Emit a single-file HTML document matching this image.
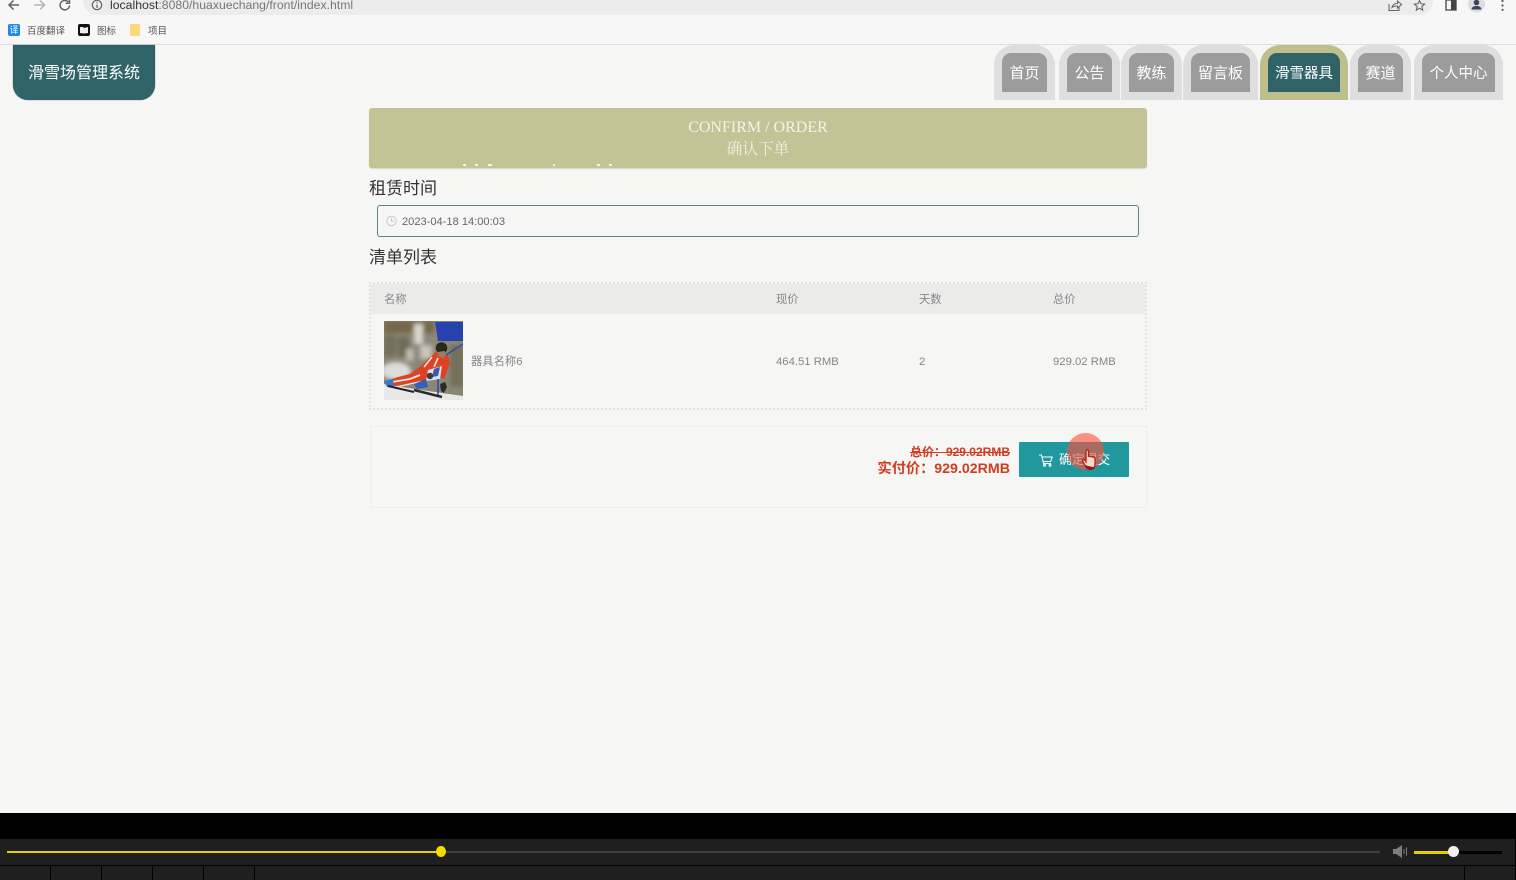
<!DOCTYPE html>
<html lang="zh"><head><meta charset="utf-8"><title>确认下单</title>
<style>
html,body{margin:0;padding:0;width:1516px;height:880px;overflow:hidden;background:#f6f6f5}
body{position:relative;font-family:"Liberation Sans","Noto Sans CJK SC",sans-serif}
.a{position:absolute;white-space:nowrap}
svg{position:absolute;overflow:visible}
.tab{position:absolute;top:45px;height:55px;background:#dedede;border-radius:20px 20px 0 0}
.tab.on{background:#bfbf8c}
.tab span{position:absolute;left:8px;right:8px;top:8px;height:39px;background:#9c9c9c;border-radius:9px 9px 0 0;color:#fff;font-size:15px;line-height:41px;text-align:center;white-space:nowrap}
.tab span.s{font-size:14.500px;line-height:42px}
.tab.on span{background:#2f6367}
.g{font-size:11.300px;color:#868686;line-height:14px}
.dash{position:absolute;top:164px;height:1.5px;background:#f4f4ea}
.div{position:absolute;top:866px;height:14px;width:1px;background:#000}
</style></head><body>

<!-- browser chrome -->
<div class="a" style="left:0;top:0;width:1516px;height:44px;background:#f7f7f7;border-bottom:1px solid #dcdcdc"></div>
<div class="a" style="left:83px;top:-12px;width:1350px;height:27px;background:#ececec;border-radius:14px"></div>
<svg style="left:0;top:0" width="120" height="15" fill="none" stroke="#5f6368" stroke-width="1.5">
<path d="M19 5H9.500M13.500 .5L9 5l4.500 4.500"/>
<path d="M34 5h10M40 .5L44.500 5 40 9.500" stroke="#b5b5b5"/>
<path d="M69.500 5.500a4.700 4.700 0 1 1-1.300-3.600M69.500 -.5v3.800h-3.800"/>
<circle cx="97" cy="5" r="4.700" stroke-width="1.200"/><path d="M97 4.500V8M97 2v1.200" stroke-width="1.200"/>
</svg>
<div class="a" style="left:110px;top:-3px;font-size:12.250px;line-height:16px;color:#777"><span style="color:#333">localhost</span>:8080/huaxuechang/front/index.html</div>
<svg style="left:1380px;top:0" width="136" height="15" fill="none" stroke="#666" stroke-width="1.100">
<path d="M9 4v6.500h10V7M12 7.500c.5-3 3-4 5.500-4V1l4 3.500-4 3.500V6c-2 0-4 .2-5.500 1.500z"/>
<path d="M39.500 .5l1.500 3.300 3.600.4-2.700 2.400.8 3.500-3.200-1.800-3.200 1.800.8-3.500-2.700-2.400 3.600-.4z"/>
<path d="M66 0h10v10H66z" stroke="#444" stroke-width="1.300"/><rect x="71" y="0" width="5" height="10" fill="#444" stroke="none"/>
<circle cx="96.500" cy="4" r="8.500" fill="#dcdce4" stroke="none"/><circle cx="96.500" cy="2.500" r="2.800" fill="#3c4358" stroke="none"/><path d="M91.500 9.500c.5-3 2.500-3.500 5-3.500s4.500.5 5 3.500z" fill="#3c4358" stroke="none"/>
<circle cx="122.500" cy="1" r="1.100" fill="#555" stroke="none"/><circle cx="122.500" cy="5.500" r="1.100" fill="#555" stroke="none"/><circle cx="122.500" cy="9.800" r="1.100" fill="#555" stroke="none"/>
</svg>
<div class="a" style="left:8px;top:24px;width:12px;height:12px;border-radius:2px;background:#1f86f0;color:#fff;font-size:9px;line-height:12px;text-align:center">译</div>
<div class="a" style="left:27px;top:25px;font-size:9.500px;line-height:13px;color:#555">百度翻译</div>
<div class="a" style="left:78px;top:24px;width:12px;height:12px;border-radius:2px;background:#111"></div>
<svg style="left:78px;top:24px" width="12" height="12"><path d="M2 3h3l1 1 4-1v6l-4 .5-4-.5z" fill="#eee"/></svg>
<div class="a" style="left:97px;top:25px;font-size:9.500px;line-height:13px;color:#555">图标</div>
<div class="a" style="left:130px;top:24px;width:10px;height:12px;border-radius:1.500px;background:#fad97a"></div>
<div class="a" style="left:148px;top:25px;font-size:9.500px;line-height:13px;color:#555">项目</div>

<!-- logo -->
<div class="a" style="left:13px;top:45px;width:142px;height:55px;background:#2f6367;border-radius:0 0 15px 15px;box-shadow:0 0 1px #2f6367"></div>
<div class="a" style="left:28px;top:62px;font-size:16px;line-height:23px;color:#fff">滑雪场管理系统</div>

<!-- nav -->
<div class="tab" style="left:994px;width:61px"><span>首页</span></div>
<div class="tab" style="left:1059px;width:61px"><span>公告</span></div>
<div class="tab" style="left:1121px;width:61px"><span>教练</span></div>
<div class="tab" style="left:1183px;width:75px"><span>留言板</span></div>
<div class="tab on" style="left:1260px;width:88px"><span class="s">滑雪器具</span></div>
<div class="tab" style="left:1350px;width:61px"><span>赛道</span></div>
<div class="tab" style="left:1414px;width:89px"><span class="s">个人中心</span></div>

<!-- banner -->
<div class="a" style="left:369px;top:108px;width:778px;height:60px;background:#c4c396;border-radius:3px;box-shadow:0 1px 1px #d8d8cc"></div>
<div class="a" style="left:369px;top:118px;width:778px;text-align:center;font-family:'Liberation Serif','Noto Serif CJK SC',serif;font-size:16px;line-height:19px;color:#f4f4ea">CONFIRM / ORDER</div>
<div class="a" style="left:369px;top:140px;width:778px;text-align:center;font-family:'Liberation Serif','Noto Serif CJK SC',serif;font-size:15.700px;line-height:20px;color:#f0f0e0">确认下单</div>
<div class="dash" style="left:463px;width:3px"></div><div class="dash" style="left:475px;width:3px"></div><div class="dash" style="left:488px;width:4px"></div><div class="dash" style="left:553px;width:2px"></div><div class="dash" style="left:597px;width:3px"></div><div class="dash" style="left:609px;width:3px"></div>

<!-- rental time -->
<div class="a" style="left:369px;top:178px;font-size:17px;line-height:22px;color:#333">租赁时间</div>
<div class="a" style="left:377px;top:205px;width:760px;height:30px;border:1px solid #5a8688;border-radius:3px"></div>
<svg style="left:386px;top:216px" width="11" height="11" fill="none" stroke="#c4c6cc" stroke-width="1"><circle cx="5.500" cy="5" r="4.700"/><path d="M5.500 2v3.200h2.500"/></svg>
<div class="a" style="left:402px;top:215px;font-size:11.100px;line-height:14px;color:#5f6a6c">2023-04-18 14:00:03</div>

<div class="a" style="left:369px;top:247px;font-size:17px;line-height:22px;color:#333">清单列表</div>

<!-- table -->
<div class="a" style="left:369px;top:282px;width:774px;height:124px;border:2px dotted #e2e2e2"></div>
<div class="a" style="left:371px;top:284px;width:774px;height:30px;background:#ebebea"></div>
<div class="a g" style="left:384px;top:293px">名称</div>
<div class="a g" style="left:776px;top:293px">现价</div>
<div class="a g" style="left:919px;top:293px">天数</div>
<div class="a g" style="left:1053px;top:293px">总价</div>

<svg style="left:384px;top:321px" width="80" height="80" viewBox="0 0 80 80">
<defs><filter id="b"><feGaussianBlur stdDeviation="2"/></filter><filter id="c"><feGaussianBlur stdDeviation=".35"/></filter><clipPath id="k"><rect width="79" height="79"/></clipPath></defs>
<g clip-path="url(#k)">
<rect width="79" height="79" fill="#8b8778"/>
<g filter="url(#b)">
<rect x="0" y="0" width="50" height="12" fill="#75694a"/>
<rect x="0" y="14" width="12" height="22" fill="#75705c"/>
<rect x="14" y="16" width="11" height="20" fill="#6f6a58"/>
<rect x="30" y="3" width="9" height="20" fill="#d8d6cc"/>
<rect x="36" y="24" width="12" height="14" fill="#c6c4ba"/>
<rect x="22" y="28" width="8" height="12" fill="#bdbbae"/>
<rect x="66" y="24" width="14" height="42" fill="#74705a"/>
<ellipse cx="12" cy="50" rx="15" ry="9" fill="#dcdcd8"/>
</g>
<path d="M0 63L30 68 79 75V79H0z" fill="#e8e8e8" filter="url(#c)"/>
<g filter="url(#c)">
<path d="M51 1H79V20H54z" fill="#2542ae"/>
<path d="M79 23L62 34" stroke="#3348a8" stroke-width="1.500" fill="none"/>
<path d="M52 31L45 37 38 44 26 53 14 56 2 60 4 66 18 64 32 62 42 60 52 54 60 58 66 42 64 34 58 36z" fill="#dd4322"/>
<path d="M8 61L26 58 36 54" stroke="#f1e9e4" stroke-width="1.800" fill="none"/>
<path d="M12 66L30 62 40 60" stroke="#f1e9e4" stroke-width="1.300" fill="none"/>
<path d="M48 36L40 46M54 37L50 46" stroke="#efe6e0" stroke-width="1.600" fill="none"/>
<path d="M44 49L58 45 56 58 42 60z" fill="#dfe1ea"/>
<path d="M50 48L56 46 54 55 48 56z" fill="#3a5ab0"/>
<path d="M30 63L42 58 44 66 33 68z" fill="#2f62b4"/>
<path d="M0 60L9 58 10 65 3 66z" fill="#3e78c8"/>
<circle cx="46" cy="55" r="3.200" fill="#3a3a3a"/>
<circle cx="57.500" cy="27" r="5.800" fill="#23291f"/>
<path d="M53 31L61 30 60 37 55 36z" fill="#a37a5e"/>
<path d="M54 58L54 76" stroke="#2a46a8" stroke-width="1.500"/>
<path d="M56 63L61 61 63 66 60 72 57 70z" fill="#2c2c2c"/>
<path d="M4 65L30 71" stroke="#222" stroke-width="2"/>
<path d="M30 69L58 76" stroke="#2b2b2b" stroke-width="2.500"/>
</g></g></svg>

<div class="a g" style="left:471px;top:355px">器具名称6</div>
<div class="a g" style="left:776px;top:355px">464.51 RMB</div>
<div class="a g" style="left:919px;top:355px">2</div>
<div class="a g" style="left:1053px;top:355px">929.02 RMB</div>

<!-- summary -->
<div class="a" style="left:370px;top:426px;width:775px;height:80px;border:1px dotted #e6e6e6"></div>
<div class="a" style="right:506px;top:445px;font-size:12px;font-weight:bold;line-height:14px;color:#d23c20;text-decoration:line-through">总价：929.02RMB</div>
<div class="a" style="right:506px;top:460px;font-size:14.200px;font-weight:bold;line-height:18px;color:#d23c20">实付价：929.02RMB</div>
<div class="a" style="left:1019px;top:442px;width:110px;height:35px;background:#21979e;border-radius:1px"></div>
<svg style="left:1039px;top:454px" width="14" height="13" fill="none" stroke="#fff" stroke-width="1"><path d="M0 1h2.500l2 8.500h7.500M3.200 3h10l-1.500 4.500H4.300"/><circle cx="5.500" cy="11.200" r="1"/><circle cx="11" cy="11.200" r="1"/></svg>
<div class="a" style="left:1059px;top:452px;font-size:12.800px;line-height:16px;color:#fff">确定提交</div>
<div class="a" style="left:1067px;top:433px;width:37px;height:37px;border-radius:50%;background:rgba(250,80,60,.62)"></div>
<svg style="left:1081px;top:449px" width="18" height="22" viewBox="0 0 18 22"><path d="M5 2c0-1.500 2.500-1.500 2.500 0v6c0-1 2.200-1 2.200.3 0-1 2.200-1 2.200.4 0-.9 2.200-.8 2.200.6V15c0 2.500-1.500 5-3.500 5H8c-2 0-3-2-4.500-4.500L1.700 12c-.7-1.300 1-2.300 2-1.200L5 12.500z" fill="#f9d8d0" stroke="#b3261a" stroke-width="1.400"/><path d="M4 16c1 3 3 5 5 5s4-1 5-3l-2 0-5-1z" fill="#7a2318"/></svg>

<!-- video player -->
<div class="a" style="left:0;top:813px;width:1516px;height:67px;background:#000"></div>
<div class="a" style="left:0;top:839px;width:1515px;height:26px;background:#1f1f1f"></div>
<div class="a" style="left:0;top:866px;width:1515px;height:14px;background:#1f1f1f"></div>
<div class="a" style="left:441px;top:851px;width:939px;height:2px;background:#3f3f3f"></div>
<div class="a" style="left:7px;top:851px;width:434px;height:2px;background:#e6cf00"></div>
<div class="a" style="left:436px;top:846px;width:10px;height:11px;border-radius:50%;background:#f6dc00"></div>
<svg style="left:1392px;top:844px" width="16" height="15"><path d="M1 5h3l6-4v13l-6-4H1z" fill="#7d7d7d"/><path d="M12 5v5M14.500 3.500v8" stroke="#7d7d7d" stroke-width="1"/></svg>
<div class="a" style="left:1453px;top:851px;width:49px;height:3px;background:#000"></div>
<div class="a" style="left:1414px;top:851px;width:39px;height:3px;background:#e6cf00"></div>
<div class="a" style="left:1448px;top:846px;width:11px;height:11px;border-radius:50%;background:#f1f1f1"></div>
<div class="div" style="left:50px"></div><div class="div" style="left:101px"></div><div class="div" style="left:152px"></div><div class="div" style="left:203px"></div><div class="div" style="left:254px"></div><div class="div" style="left:1464px"></div>
</body></html>
